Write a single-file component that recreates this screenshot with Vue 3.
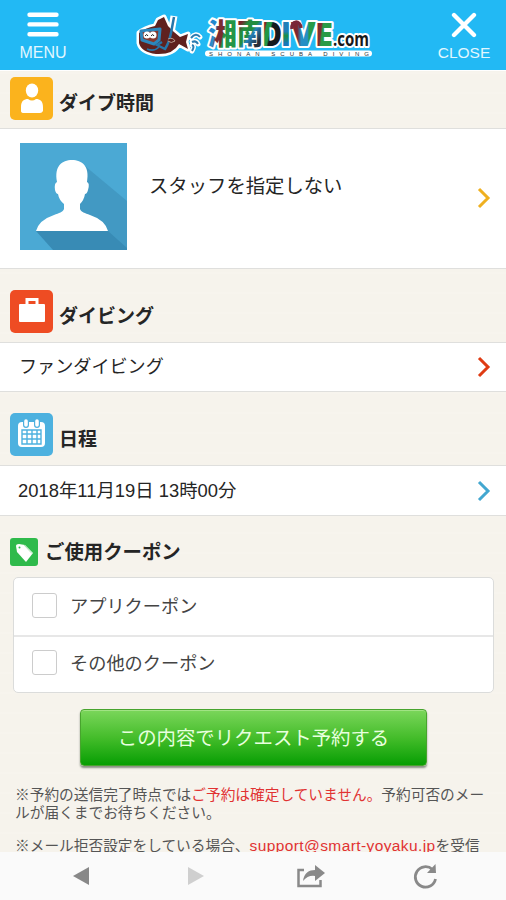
<script setup>
const coupons = ['アプリクーポン', 'その他のクーポン']
</script>

<template>
  <div class="screen">
    <header class="topbar">
      <button class="nav menu">
        <svg width="32" height="26" viewBox="0 0 32 26"><path d="M2.5 2.8h27M2.5 12.4h27M2.5 22.2h27" stroke="#fff" stroke-width="4.4" stroke-linecap="round" /></svg>
        <span>MENU</span>
      </button>
      <svg class="logo" width="240" height="50" viewBox="0 0 240 50">
        <defs>
          <linearGradient id="g1" x2="1" y2=".3"><stop offset=".3" stop-color="#2388cd" /><stop offset=".36" stop-color="#338fc4" /><stop offset=".42" stop-color="#7c2b31" /><stop offset=".6" stop-color="#7c2b31" /><stop offset=".66" stop-color="#239548" /></linearGradient>
          <linearGradient id="g2" x2=".8" y2="1"><stop offset=".25" stop-color="#73252c" /><stop offset=".38" stop-color="#228d3f" /><stop offset=".55" stop-color="#228d3f" /><stop offset=".62" stop-color="#2280ba" /><stop offset=".85" stop-color="#282e36" /></linearGradient>
          <linearGradient id="g3" x2="1" y2=".5"><stop offset=".25" stop-color="#7d252c" /><stop offset=".32" stop-color="#229747" /><stop offset=".48" stop-color="#229747" /><stop offset=".55" stop-color="#16191d" /></linearGradient>
          <linearGradient id="g4" x2="0" y2="1"><stop offset=".45" stop-color="#217fb8" /><stop offset=".55" stop-color="#198f45" /><stop offset=".72" stop-color="#1779b9" /></linearGradient>
          <linearGradient id="g5" x2="1"><stop offset=".25" stop-color="#7c2630" /><stop offset=".4" stop-color="#258fc5" /><stop offset=".65" stop-color="#258fc5" /><stop offset=".72" stop-color="#279b49" /></linearGradient>
          <linearGradient id="g6" x2="1" y2=".3"><stop offset=".4" stop-color="#822a31" /><stop offset=".5" stop-color="#2a9b46" /></linearGradient>
        </defs>
        <g stroke="#fff" stroke-width="5" stroke-linejoin="round" fill="#fff">
          <path d="M5 22Q11 17 21 15L24 9l6-3 4 9 6 6 6 5 8-3-2 8 2 7-9-5Q39 44 22 43 7 41 5 32Z" />
          <path d="M40 5 37 22 31 38 23 34" fill="none" stroke-width="7" />
        </g>
        <path d="M5 22Q11 17 21 15L24 9l6-3 4 9 6 6 6 5 8-3-2 8 2 7-9-5Q39 44 22 43 7 41 5 32Z" fill="#5f211f" />
        <path d="M7 20 26 18 25 29 20 33 8 29Z" fill="#84392f" stroke="#2c87bd" stroke-width="3" stroke-linejoin="round" />
        <circle cx="13" cy="24" r="3.5" fill="#fff" /><circle cx="19" cy="24" r="3.5" fill="#fff" />
        <path d="M11 25q2-3 3 0m3 0q2-3 3 0" fill="none" stroke="#222" />
        <path d="M13 38q7 3 12-2" stroke="#2776aa" stroke-width="1.5" fill="none" />
        <path d="M40 6 37 22Q35 32 31 38l-8-4 5-3" fill="none" stroke="#2776aa" stroke-width="2.5" />
        <path d="M34 28q5-2 7 2-4 3-7 0" fill="#5f211f" stroke="#b99d91" />
        <path d="M57 27q5-6 9-1M58 31q4-2 6 2M58 34q3 1 0 6" fill="none" stroke="#fff" stroke-width="5" stroke-linecap="round" />
        <path d="M57 27q5-6 9-1M58 31q4-2 6 2M58 34q3 1 0 6" fill="none" stroke="#2c7bb0" stroke-width="2" />
        <path d="M74 42.5h161" stroke="#fff" stroke-width="6" stroke-linecap="round" />
        <g class="jp" stroke="#fff" stroke-width="4" paint-order="stroke" stroke-linejoin="round">
          <text x="74" y="34" font-size="29" textLength="29" lengthAdjust="spacingAndGlyphs" fill="url(#g1)">湘</text>
          <text x="103" y="34" font-size="29" textLength="26" lengthAdjust="spacingAndGlyphs" fill="url(#g2)">南</text>
        </g>
        <g class="brand" stroke="#fff" stroke-width="4" paint-order="stroke" stroke-linejoin="round">
          <text x="128" y="35" font-size="33" textLength="20" lengthAdjust="spacingAndGlyphs" fill="url(#g3)">D</text>
          <text x="147" y="35" font-size="33" textLength="10" lengthAdjust="spacingAndGlyphs" fill="url(#g4)">I</text>
          <text x="157" y="35" font-size="33" textLength="25" lengthAdjust="spacingAndGlyphs" fill="url(#g5)">V</text>
          <text x="181" y="35" font-size="31" textLength="18" lengthAdjust="spacingAndGlyphs" fill="url(#g6)">E</text>
          <text class="domain" x="199" y="35" font-size="19" textLength="36" lengthAdjust="spacingAndGlyphs" fill="#17181a">.com</text>
        </g>
        <path d="M158 18c-1-9 8-9 9-1" fill="none" stroke="#792738" stroke-width="3.5" />
        <text class="tagline" x="75" y="45" textLength="160">SHONAN SCUBA DIVING</text>
      </svg>
      <button class="nav close">
        <svg width="32" height="26" viewBox="0 0 32 26"><path d="m6 3 20 20m0-20-20 20" stroke="#fff" stroke-width="4.3" stroke-linecap="round" /></svg>
        <span>CLOSE</span>
      </button>
    </header>

    <main>
      <h2 class="heading first">
        <svg class="icon" viewBox="0 0 43 43"><rect width="43" height="43" rx="5" fill="#fbb31d" /><ellipse cx="22" cy="13.5" rx="6.2" ry="7" fill="#fff" /><path d="M11 34v-4c0-6 3-8 7-8q4 3 8 0c4 0 7 2 7 8v4q-1 2-3 2H14q-3 0-3-2" fill="#fff" /></svg>
        <span>ダイブ時間</span>
      </h2>
      <section class="row staff">
        <svg class="avatar" viewBox="0 0 107 107">
          <rect width="107" height="107" fill="#4ba9d4" />
          <path d="M65 23 107 58v49H60L50 80Z" fill="#4299c3" />
          <path d="M88 88H16l17 19h74v-2Z" fill="#388bb5" />
          <path d="M37 39C34 23 42 17 52 17s18 6 15 22q3 1 1 8-1 4-3 4-1 6-5 10v5c1 3 5 4 10 6q15 5 18 16H16q3-11 18-16c5-2 9-3 10-6v-5q-5-4-6-10-2 0-3-4-1-7 2-8Z" fill="#fff" />
        </svg>
        <span class="name">スタッフを指定しない</span>
        <svg class="chevron gold" viewBox="0 0 14 22"><path d="m2 2 9 9-9 9" /></svg>
      </section>

      <h2 class="heading">
        <svg class="icon" viewBox="0 0 43 43"><rect width="43" height="43" rx="5" fill="#ee4c23" /><path d="M17 15V9.5h10V15" fill="none" stroke="#fff" stroke-width="3" /><rect x="9" y="14" width="26" height="18" rx="1" fill="#fff" /></svg>
        <span>ダイビング</span>
      </h2>
      <section class="row">
        <span>ファンダイビング</span>
        <svg class="chevron red" viewBox="0 0 14 22"><path d="m2 2 9 9-9 9" /></svg>
      </section>

      <h2 class="heading">
        <svg class="icon" viewBox="0 0 43 43"><rect width="43" height="43" rx="5" fill="#4db1df" /><rect x="8" y="9" width="27" height="25" rx="4" fill="#fff" /><path d="M16 7v5m11-5v5" stroke="#4db1df" stroke-width="6" stroke-linecap="round" /><path d="M16 8v4m11-4v4" stroke="#fff" stroke-width="3.6" stroke-linecap="round" /><path d="M12 17h19v14H12ZM12 21h19m-19 5h19M17 17v14m5-14v14m5-14v14" fill="none" stroke="#4db1df" stroke-width="1.4" /></svg>
        <span>日程</span>
      </h2>
      <section class="row date">
        <span>2018年11月19日 13時00分</span>
        <svg class="chevron blue" viewBox="0 0 14 22"><path d="m2 2 9 9-9 9" /></svg>
      </section>

      <section class="coupon">
        <h2>
          <svg width="28" height="28" viewBox="0 0 28 28"><rect width="28" height="28" rx="3" fill="#2fba4b" /><path d="M6 8q0-2 3-2l6 1 8 8-7 9-9-10Z" fill="#fff" /><circle cx="9.5" cy="9.5" r="1" fill="#2fba4b" /><path d="m14 7 8 8.500" stroke="#91d998" stroke-width=".7" /></svg>
          <span>ご使用クーポン</span>
        </h2>
        <div class="options">
          <label v-for="coupon in coupons" :key="coupon"><input type="checkbox"><span>{{ coupon }}</span></label>
        </div>
      </section>
      <button class="submit">この内容でリクエスト予約する</button>
      <div class="notes">
        <p>※予約の送信完了時点では<em>ご予約は確定していません。</em>予約可否のメー<br>ルが届くまでお待ちください。</p>
        <p>※メール拒否設定をしている場合、<em class="email">support@smart-yoyaku.jp</em>を受信</p>
      </div>
    </main>

    <footer>
      <svg viewBox="0 0 32 32"><path d="M8 16 24 7v18Z" fill="#888" /></svg>
      <svg viewBox="0 0 32 32"><path d="M24 16 8 7v18Z" fill="#cfcfcf" /></svg>
      <svg viewBox="0 0 32 32"><path d="M9 10H3.500v16h22v-6" fill="none" stroke="#898989" stroke-width="2.5" /><path d="M8 21C9 13 14 10 20 10V5l10 8-10 8v-5q-7-1-12 5Z" fill="#898989" /></svg>
      <svg viewBox="0 0 32 32"><path d="M22.500 9.500A10.200 10.200 0 1 0 25.500 19" fill="none" stroke="#898989" stroke-width="2.8" /><path d="m25.500 4 .5 9h-9Z" fill="#898989" /></svg>
    </footer>
  </div>
</template>

<style>
body { margin: 0; }
</style>
<style scoped>
* { box-sizing: border-box; }
.screen { width: 506px; height: 900px; display: flex; flex-direction: column; overflow: hidden; font-family: "Liberation Sans", "Noto Sans CJK JP", sans-serif; background: #f6f3ec; color: #252525; }
.topbar { height: 71px; flex: none; display: flex; justify-content: space-between; background: #22b9f4; border-bottom: 1px solid #fff; }
button { border: 0; padding: 0; font: inherit; }
.nav { display: flex; flex-direction: column; align-items: center; background: none; color: #e1f7ff; font-size: 16px; line-height: 18px; padding-top: 12px; gap: 6px; }
.menu { width: 86px; }
.close { width: 84px; font-size: 15.500px; }
.logo { margin-top: 11px; }
.jp { font-family: "Noto Sans CJK JP", sans-serif; font-weight: 900; }
.brand { font-family: "Open Sans", sans-serif; font-weight: 800; }
.domain { font-family: "Open Sans", sans-serif; font-weight: 700; }
.tagline { font: 6px "Liberation Sans", sans-serif; fill: #25333b; }
main { height: 781px; flex: none; overflow: hidden; background: repeating-linear-gradient(0deg, transparent 0px, transparent 18px, #f8f5ef 19px, transparent 20px), #f6f3ec; }
h2 { margin: 0; font-size: 19px; line-height: 26px; font-weight: 700; }
.heading { height: 73px; display: flex; align-items: flex-start; padding: 21px 10px 0; gap: 6px; }
.heading.first { height: 57px; padding-top: 6px; }
.heading span { margin-top: 14px; }
.icon { width: 43px; height: 43px; flex: none; }
.row { height: 50px; display: flex; align-items: center; justify-content: space-between; padding: 0 15px 0 19px; border: solid #dfdfdd; border-width: 1px 0; background: #fff; font-size: 18.1px; line-height: 26px; }
.staff { height: 141px; padding: 0 15px 2px 20px; }
.date { padding-left: 18px; height: 51px; font-size: 18.4px; }
.avatar { width: 107px; height: 107px; margin-top: -3px; }
.name { font-size: 19.35px; flex: 1; margin: -23px 0 0 22px; }
.chevron { width: 14px; height: 22px; fill: none; stroke-width: 3; }
.gold { stroke: #efb020; }
.red { stroke: #df3b13; }
.blue { stroke: #43a7d0; }
.coupon { padding: 22px 12px 0 10px; }
.coupon h2 { display: flex; align-items: center; gap: 7px; height: 28px; font-size: 19.4px; }
.options { height: 116px; margin: 11px 0 0 3px; background: #fff; border: 1px solid #dbdcdb; border-radius: 5px; }
.options label { height: 57px; display: flex; align-items: center; gap: 13px; padding: 0 0 2px 18px; font-size: 18.2px; color: #444; }
.options label > span { margin-top: -1px; }
.options label + label { border-top: 2px solid #e7e7e7; padding-bottom: 4px; }
.options input { appearance: none; width: 25px; height: 25px; margin: 0; border: 1px solid #ccc; border-radius: 3px; background: #fff; }
.submit { display: block; width: 347px; height: 57px; margin: 16px 0 0 80px; padding-bottom: 2px; background: linear-gradient(#7bd65b, #45bd2b 50%, #079e03); border: 1px solid #48a42e; border-radius: 4px; box-shadow: 0 2px 2px #889083, inset 0 1px #a1e384; color: #e7ffdf; font-size: 19.4px; }
.notes { padding: 20px 0 0 15px; font-size: 14.7px; line-height: 18px; color: #555; white-space: nowrap; }
.notes p { margin: 0 0 15px; }
.notes em { color: #e13232; font-style: normal; }
.notes .email { font-size: 15.500px; letter-spacing: .4px; }
footer { height: 48px; flex: none; display: flex; justify-content: space-around; align-items: center; padding: 0 23px 0 24px; background: #fafafa; }
footer svg { width: 32px; height: 32px; }
</style>
